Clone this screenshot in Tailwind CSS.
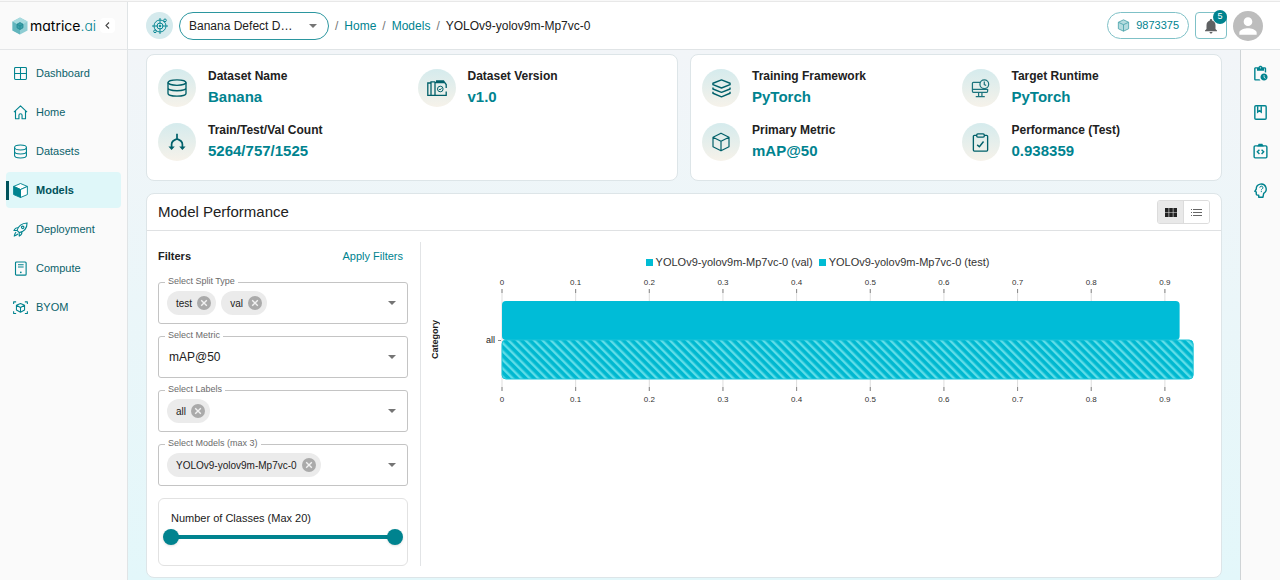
<!DOCTYPE html>
<html lang="en">
<head>
    <meta charset="UTF-8">
    <meta name="viewport" content="width=device-width, initial-scale=1.0">
    <title>matrice.ai - Model Performance</title>
    <script src="https://cdn.jsdelivr.net/npm/@tailwindcss/browser@4"></script>
</head>
<body class="bg-[#f8f8f8] pt-px font-['Liberation_Sans',Arial,sans-serif] text-[#212121]">
    <div class="flex min-h-[calc(100vh-1px)] border-t border-[#e8e8e8]">

        <!-- Sidebar -->
        <aside class="w-32 shrink-0 border-r border-[#e0e4e6] bg-[#fafafa]">
            <div class="flex h-12 items-center border-b border-[#e4e6e8] pl-3">
                <a href="#" class="flex items-center gap-[2px]">
                    <svg class="h-[18px] w-4" viewBox="0 0 16 18">
                        <path d="M8 .5 15.5 4.5v9L8 17.5.5 13.5v-9z" fill="#8fcdd3"/>
                        <path d="M8 .5 15.5 4.500 8 9 .5 4.500z" fill="#a9dbdf"/>
                        <path d="M.5 4.500 8 9v8.500L.5 13.500z" fill="#62b5bd"/>
                        <path d="M8 5.500 11 7.200v3.600L8 12.500 5 10.800V7.200z" fill="#3b9fa9" stroke="#1f8791" stroke-width=".8"/>
                        <path d="M5 7.200 8 9l3-1.800M8 9v3.500" fill="none" stroke="#1f8791" stroke-width=".7"/>
                    </svg>
                    <span class="font-[Inter,sans-serif] text-[14px] leading-5 text-black [font-feature-settings:'cv11','ss03']">matrice<span class="font-light text-[#00838f]">.ai</span></span>
                </a>
                <button type="button" aria-label="Collapse menu" class="ml-1 flex size-[15px] items-center justify-center rounded-sm bg-white">
                    <svg class="size-[9px]" viewBox="0 0 9 9" fill="none" stroke="#444" stroke-width="1.1"><path d="M6 1.500 3 4.500l3 3"/></svg>
                </button>
            </div>
            <nav class="flex flex-col gap-[3px] px-[6px] pt-[5px] text-[11px] text-[#0b626b]">
                <a href="#" class="flex h-9 items-center gap-2 rounded-sm pl-[7px]">
                    <svg class="size-[15px]" viewBox="0 0 24 24" fill="none" stroke="#00838f" stroke-width="1.700"><rect x="2.500" y="2.500" width="19" height="19" rx="1.500"/><path d="M12 2.500v19M2.500 12h19"/></svg>
                    Dashboard
                </a>
                <a href="#" class="flex h-9 items-center gap-2 rounded-sm pl-[7px]">
                    <svg class="size-[15px]" viewBox="0 0 24 24" fill="none" stroke="#00838f" stroke-width="1.800" stroke-linejoin="round"><path d="M1.500 11.500 12 1.500l10.500 10M4 9.500V22h5.500v-5.500a2.500 2.500 0 0 1 5 0V22H20V9.500"/></svg>
                    Home
                </a>
                <a href="#" class="flex h-9 items-center gap-2 rounded-sm pl-[7px]">
                    <svg class="size-[15px]" viewBox="0 0 24 24" fill="none" stroke="#00838f" stroke-width="1.700"><ellipse cx="12" cy="5.500" rx="9.500" ry="4"/><path d="M2.500 5.500v13c0 2.200 4.300 4 9.500 4s9.500-1.800 9.500-4v-13M2.500 12c0 2.200 4.300 4 9.500 4s9.500-1.800 9.500-4"/></svg>
                    Datasets
                </a>
                <a href="#" aria-current="page" class="flex h-9 items-center gap-1 rounded-sm bg-[#dff7f9] font-bold text-[#00525b]">
                    <span class="h-[19px] w-[3px] bg-[#00525b]"></span>
                    <span class="flex items-center gap-2">
                        <svg class="size-[15px]" viewBox="0 0 24 24" stroke="#00838f" stroke-width="1.500" stroke-linejoin="round"><path d="M12 .8 23 5.500 12 10.500 1 5.500z" fill="#fff"/><path d="M23 5.500v13l-11 4.700V10.500z" fill="#fff"/><path d="M1 5.500l11 5v12.700L1 18.500z" fill="#00838f"/></svg>
                        Models
                    </span>
                </a>
                <a href="#" class="flex h-9 items-center gap-2 rounded-sm pl-[7px]">
                    <svg class="size-[15px]" viewBox="0 0 24 24" fill="none" stroke="#00838f" stroke-width="1.800" stroke-linecap="round" stroke-linejoin="round"><path d="M4.500 16.500c-1.500 1.260-2.500 6-2.500 6s4.240-1.500 5.500-3M10 17l-3.500-3.500C8 8 11 2 22.500 1.500 22.500 12 16 15.500 10 17zM8.500 9.500C5 8.500 3 10.500 1.500 13.500l5 0M14 15.500c1 3.500-1 5.500-4 7l0-5.500"/><circle cx="15.500" cy="8.500" r="2"/></svg>
                    Deployment
                </a>
                <a href="#" class="flex h-9 items-center gap-2 rounded-sm pl-[7px]">
                    <svg class="size-[15px]" viewBox="0 0 24 24" fill="none" stroke="#00838f" stroke-width="1.800"><rect x="4" y="1.500" width="17" height="21" rx="1.500"/><path d="M8 6h9M8 9.500h9"/><circle cx="12.500" cy="18" r="1.400" fill="#00838f" stroke="none"/></svg>
                    Compute
                </a>
                <a href="#" class="flex h-9 items-center gap-2 rounded-sm pl-[7px]">
                    <svg class="size-[15px]" viewBox="0 0 24 24" fill="none" stroke="#00838f" stroke-width="1.700" stroke-linejoin="round"><path d="M1 6.500V3h4M19 3h4v3.500M23 18v3.500h-4M5 21.500H1V18"/><path d="M12 5.500 18.500 8.500v7.500L12 19.500 5.500 16V8.500zM5.500 8.500 12 12l6.500-3.500M12 12v7.500"/></svg>
                    BYOM
                </a>
            </nav>
        </aside>

        <div class="flex min-w-0 flex-1 flex-col">
            <!-- Top bar -->
            <header class="flex h-12 items-center justify-between border-b border-[#e0e4e6] bg-white pl-[18px] pr-[17px]">
                <div class="flex items-center gap-[6px] text-[12px]">
                    <span class="flex size-[27px] items-center justify-center rounded-full bg-[#d5eaed]">
                        <svg class="size-4" viewBox="0 0 24 24" fill="none" stroke="#00838f" stroke-width="1.400"><circle cx="12" cy="12" r="9"/><circle cx="12" cy="12" r="4.500"/><circle cx="12" cy="12" r="1.300" fill="#00838f"/><path d="M12 0v9M12 15v9M0 12h9M15 12h9"/><circle cx="19.500" cy="3.500" r="2" fill="#d5eaed"/><circle cx="4.500" cy="20" r="2" fill="#d5eaed"/></svg>
                    </span>
                    <div class="grid items-center">
                        <select aria-label="Project" class="col-start-1 row-start-1 h-7 w-[150px] appearance-none rounded-full border border-[#2b969f] bg-white pl-[9px] text-[12px]">
                            <option>Banana Defect D…</option>
                        </select>
                        <svg class="pointer-events-none col-start-1 row-start-1 mr-3 h-1 w-2 justify-self-end" viewBox="0 0 8 4"><path d="M0 0h8L4 4z" fill="#757575"/></svg>
                    </div>
                    <span class="text-[#757575]">/</span>
                    <a href="#" class="text-[#00838f]">Home</a>
                    <span class="text-[#757575]">/</span>
                    <a href="#" class="text-[#00838f]">Models</a>
                    <span class="text-[#757575]">/</span>
                    <span>YOLOv9-yolov9m-Mp7vc-0</span>
                </div>
                <div class="flex items-center gap-[6px]">
                    <button type="button" class="flex h-[27px] items-center gap-[6px] rounded-full border border-[#7fc1c7] bg-white px-[9px] text-[11px] text-[#00838f]">
                        <svg class="size-[13px]" viewBox="0 0 24 24" fill="#b5dcdf" stroke="#3e9ca5" stroke-width="1.400" stroke-linejoin="round"><path d="M12 1.500 21.500 6v12L12 22.500 2.500 18V6z"/><path d="M2.500 6 12 10.500 21.500 6M12 10.500v12"/></svg>
                        9873375
                    </button>
                    <button type="button" aria-label="Notifications" class="relative flex h-[27px] w-8 items-center justify-center rounded-[4px] border border-[#7fc1c7] bg-white">
                        <svg class="mt-px size-[18px]" viewBox="0 0 24 24" fill="#5f6163"><path d="M12 22c1.100 0 2-.9 2-2h-4c0 1.100.89 2 2 2zm6-6v-5c0-3.070-1.640-5.640-4.500-6.320V4c0-.83-.67-1.500-1.500-1.500s-1.500.67-1.500 1.500v.68C7.630 5.360 6 7.920 6 11v5l-2 2v1h16v-1l-2-2z"/></svg>
                        <span class="absolute -right-px -top-[3px] flex size-[14px] items-center justify-center rounded-full bg-[#00838f] text-[9px] text-white">5</span>
                    </button>
                    <button type="button" aria-label="Account" class="flex size-[30px] items-center justify-center rounded-full bg-[#bdbdbd]">
                        <svg class="size-[26px]" viewBox="0 0 24 24" fill="#fff"><path d="M12 12c2.210 0 4-1.790 4-4s-1.790-4-4-4-4 1.790-4 4 1.790 4 4 4zm0 2c-2.670 0-8 1.340-8 4v2h16v-2c0-2.660-5.330-4-8-4z"/></svg>
                    </button>
                </div>
            </header>

            <div class="flex flex-1">
                <main class="flex min-w-0 flex-1 flex-col gap-3 bg-linear-to-b from-[#f2f5f8] to-[#e3f7fa] px-[18px] pb-[2px] pt-1">
                    <!-- Summary cards -->
                    <div class="grid grid-cols-2 gap-3">
                        <section class="grid grid-cols-2 gap-x-[11px] gap-y-3 rounded-lg border border-[#dde5e8] bg-white px-[11px] pb-[17px] pt-3">
                            <div class="flex h-[42px] items-center gap-3">
                                <span class="flex size-[38px] items-center justify-center rounded-full bg-linear-to-b from-[#d5ebed] to-[#f6f2ea]">
                                    <svg class="h-[18px] w-5" viewBox="0 0 22 20" fill="none" stroke="#00606a" stroke-width="1.500"><ellipse cx="11" cy="4" rx="10" ry="3"/><path d="M1 4v12c0 1.700 4.500 3 10 3s10-1.300 10-3V4M1 10c0 1.700 4.500 3 10 3s10-1.300 10-3"/></svg>
                                </span>
                                <div>
                                    <p class="text-[12px] font-bold leading-[18px]">Dataset Name</p>
                                    <p class="text-[15px] font-bold leading-6 text-[#00838f]">Banana</p>
                                </div>
                            </div>
                            <div class="flex h-[42px] items-center gap-3">
                                <span class="flex size-[38px] items-center justify-center rounded-full bg-linear-to-b from-[#d5ebed] to-[#f6f2ea]">
                                    <svg class="h-4 w-5" viewBox="0 0 20 16" fill="none" stroke="#00606a" stroke-width="1.300"><path d="M4 3H.8v12.300H4M8 1.800H4v13.500h4M19.200 11.500v3.800H8V2.500h9M19.200 8V4.500L16.500 1H9"/><circle cx="13.300" cy="9" r="2.800" stroke-width="1"/><path d="M12 9l1 1 1.600-1.800" stroke-width=".9"/></svg>
                                </span>
                                <div>
                                    <p class="text-[12px] font-bold leading-[18px]">Dataset Version</p>
                                    <p class="text-[15px] font-bold leading-6 text-[#00838f]">v1.0</p>
                                </div>
                            </div>
                            <div class="flex h-[42px] items-center gap-3">
                                <span class="flex size-[38px] items-center justify-center rounded-full bg-linear-to-b from-[#d5ebed] to-[#f6f2ea]">
                                    <svg class="size-[18px]" viewBox="0 0 20 20" fill="none" stroke="#00606a" stroke-width="1.900"><path d="M10 .8v5.700M4 17v-4.500c0-3.500 3-5 6-6 3 1 6 2.500 6 6V17"/><path d="M.5 15h7L4 19zM12.500 15h7L16 19z" fill="#00606a" stroke="none"/></svg>
                                </span>
                                <div>
                                    <p class="text-[12px] font-bold leading-[18px]">Train/Test/Val Count</p>
                                    <p class="text-[15px] font-bold leading-6 text-[#00838f]">5264/757/1525</p>
                                </div>
                            </div>
                        </section>

                        <section class="grid grid-cols-2 gap-x-[11px] gap-y-3 rounded-lg border border-[#dde5e8] bg-white px-[11px] pb-[17px] pt-3">
                            <div class="flex h-[42px] items-center gap-3">
                                <span class="flex size-[38px] items-center justify-center rounded-full bg-linear-to-b from-[#d5ebed] to-[#f6f2ea]">
                                    <svg class="size-[19px]" viewBox="0 0 20 20" fill="none" stroke="#00606a" stroke-width="1.500" stroke-linejoin="round"><path d="M10 1 19 4.500v1.500L10 9.500 1 6v-1.500zM1 9v1.500L10 14l9-3.500V9M1 13.500V15l9 3.800 9-3.800v-1.500"/></svg>
                                </span>
                                <div>
                                    <p class="text-[12px] font-bold leading-[18px]">Training Framework</p>
                                    <p class="text-[15px] font-bold leading-6 text-[#00838f]">PyTorch</p>
                                </div>
                            </div>
                            <div class="flex h-[42px] items-center gap-3">
                                <span class="flex size-[38px] items-center justify-center rounded-full bg-linear-to-b from-[#d5ebed] to-[#f6f2ea]">
                                    <svg class="size-[19px]" viewBox="0 0 20 20" fill="none" stroke="#1c747d" stroke-width="1.300"><path d="M10 3.500H2.500a1 1 0 0 0-1 1V13a1 1 0 0 0 1 1h14a1 1 0 0 0 1-1v-2.500M1.500 11h16M8 14v4M11.500 14v4M5 18.500h9.500"/><circle cx="14" cy="5.500" r="4.600"/><path d="M14 2.500v3.300l2 1"/></svg>
                                </span>
                                <div>
                                    <p class="text-[12px] font-bold leading-[18px]">Target Runtime</p>
                                    <p class="text-[15px] font-bold leading-6 text-[#00838f]">PyTorch</p>
                                </div>
                            </div>
                            <div class="flex h-[42px] items-center gap-3">
                                <span class="flex size-[38px] items-center justify-center rounded-full bg-linear-to-b from-[#d5ebed] to-[#f6f2ea]">
                                    <svg class="size-5" viewBox="0 0 20 20" fill="none" stroke="#00606a" stroke-width="1.200" stroke-linejoin="round"><path d="M10 1.200 18 5.200v9.600l-8 4-8-4V5.200zM2 5.200l8 4 8-4M10 9.200v9.600"/></svg>
                                </span>
                                <div>
                                    <p class="text-[12px] font-bold leading-[18px]">Primary Metric</p>
                                    <p class="text-[15px] font-bold leading-6 text-[#00838f]">mAP@50</p>
                                </div>
                            </div>
                            <div class="flex h-[42px] items-center gap-3">
                                <span class="flex size-[38px] items-center justify-center rounded-full bg-linear-to-b from-[#d5ebed] to-[#f6f2ea]">
                                    <svg class="size-[19px]" viewBox="0 0 20 20" fill="none" stroke="#00606a" stroke-width="1.400" stroke-linejoin="round"><path d="M6 2.500H3.500a1 1 0 0 0-1 1V18a1 1 0 0 0 1 1h13a1 1 0 0 0 1-1V3.500a1 1 0 0 0-1-1H14"/><rect x="6" y="1" width="8" height="3.400" rx="1.200"/><path d="M6.500 12.500l2.300 2 4.400-5.500" stroke-width="1.500"/></svg>
                                </span>
                                <div>
                                    <p class="text-[12px] font-bold leading-[18px]">Performance (Test)</p>
                                    <p class="text-[15px] font-bold leading-6 text-[#00838f]">0.938359</p>
                                </div>
                            </div>
                        </section>
                    </div>

                    <!-- Model performance -->
                    <section class="rounded-lg border border-[#dde5e8] bg-white">
                        <div class="flex h-[37px] items-center justify-between border-b border-[#dfe1e3] px-[11px]">
                            <h2 class="text-[15px]">Model Performance</h2>
                            <div class="flex h-6 overflow-hidden rounded-[3px] border border-[#dcdcdc]">
                                <button type="button" aria-label="Grid view" class="flex w-[26px] items-center justify-center border-r border-[#dcdcdc] bg-[#e9e9e9]">
                                    <svg class="h-[9px] w-3" viewBox="0 0 12 9" fill="#222"><path d="M0 0h3.600v4.200H0zM4.200 0h3.600v4.200H4.200zM8.400 0H12v4.200H8.400zM0 4.800h3.600V9H0zM4.200 4.800h3.600V9H4.200zM8.400 4.800H12V9H8.400z"/></svg>
                                </button>
                                <button type="button" aria-label="List view" class="flex w-[25px] items-center justify-center bg-white">
                                    <svg class="h-[7px] w-[11px]" viewBox="0 0 11 7" fill="#666"><path d="M0 0h1v1H0zM2 0h9v1H2zM0 3h1v1H0zM2 3h9v1H2zM0 6h1v1H0zM2 6h9v1H2z"/></svg>
                                </button>
                            </div>
                        </div>

                        <div class="flex p-[11px]">
                            <form class="flex w-[250px] shrink-0 flex-col gap-3">
                                <div class="flex h-7 items-center justify-between text-[11px]">
                                    <h3 class="font-bold">Filters</h3>
                                    <button type="button" class="pr-[5px] text-[#00838f]">Apply Filters</button>
                                </div>

                                <div class="relative flex h-[42px] items-center gap-[5px] rounded-[3px] border border-[#c4c4c4] pl-2">
                                    <label for="split_type" class="absolute -top-2 left-[6px] bg-white px-[3px] text-[9px] leading-3 text-[#6b6b6b]">Select Split Type</label>
                                    <span class="flex h-6 items-center gap-[5px] rounded-full bg-[#ebebeb] pl-[9px] pr-[5px] text-[10px]">test
                                        <button type="button" aria-label="Remove test"><svg class="block size-[14px]" viewBox="0 0 14 14"><circle cx="7" cy="7" r="7" fill="#aaaaaa"/><path d="M4.200 4.200l5.600 5.600M9.800 4.200 4.200 9.800" stroke="#f2f2f2" stroke-width="1.400"/></svg></button>
                                    </span>
                                    <span class="flex h-6 items-center gap-[5px] rounded-full bg-[#ebebeb] pl-[9px] pr-[5px] text-[10px]">val
                                        <button type="button" aria-label="Remove val"><svg class="block size-[14px]" viewBox="0 0 14 14"><circle cx="7" cy="7" r="7" fill="#aaaaaa"/><path d="M4.200 4.200l5.600 5.600M9.800 4.200 4.200 9.800" stroke="#f2f2f2" stroke-width="1.400"/></svg></button>
                                    </span>
                                    <select id="split_type" class="h-full min-w-0 flex-1 appearance-none"><option></option></select>
                                    <svg class="pointer-events-none mr-[11px] h-1 w-2" viewBox="0 0 8 4"><path d="M0 0h8L4 4z" fill="#757575"/></svg>
                                </div>

                                <div class="relative flex h-[42px] items-center gap-[5px] rounded-[3px] border border-[#c4c4c4]">
                                    <label for="metric" class="absolute -top-2 left-[6px] bg-white px-[3px] text-[9px] leading-3 text-[#6b6b6b]">Select Metric</label>
                                    <select id="metric" class="h-full min-w-0 flex-1 appearance-none pl-[10px] text-[12px]"><option>mAP@50</option></select>
                                    <svg class="pointer-events-none mr-[11px] h-1 w-2" viewBox="0 0 8 4"><path d="M0 0h8L4 4z" fill="#757575"/></svg>
                                </div>

                                <div class="relative flex h-[42px] items-center gap-[5px] rounded-[3px] border border-[#c4c4c4] pl-2">
                                    <label for="labels" class="absolute -top-2 left-[6px] bg-white px-[3px] text-[9px] leading-3 text-[#6b6b6b]">Select Labels</label>
                                    <span class="flex h-6 items-center gap-[5px] rounded-full bg-[#ebebeb] pl-[9px] pr-[5px] text-[10px]">all
                                        <button type="button" aria-label="Remove all"><svg class="block size-[14px]" viewBox="0 0 14 14"><circle cx="7" cy="7" r="7" fill="#aaaaaa"/><path d="M4.200 4.200l5.600 5.600M9.800 4.200 4.200 9.800" stroke="#f2f2f2" stroke-width="1.400"/></svg></button>
                                    </span>
                                    <select id="labels" class="h-full min-w-0 flex-1 appearance-none"><option></option></select>
                                    <svg class="pointer-events-none mr-[11px] h-1 w-2" viewBox="0 0 8 4"><path d="M0 0h8L4 4z" fill="#757575"/></svg>
                                </div>

                                <div class="relative flex h-[42px] items-center gap-[5px] rounded-[3px] border border-[#c4c4c4] pl-2">
                                    <label for="models" class="absolute -top-2 left-[6px] bg-white px-[3px] text-[9px] leading-3 text-[#6b6b6b]">Select Models (max 3)</label>
                                    <span class="flex h-6 items-center gap-[5px] rounded-full bg-[#ebebeb] pl-[9px] pr-[5px] text-[10px]">YOLOv9-yolov9m-Mp7vc-0
                                        <button type="button" aria-label="Remove YOLOv9-yolov9m-Mp7vc-0"><svg class="block size-[14px]" viewBox="0 0 14 14"><circle cx="7" cy="7" r="7" fill="#aaaaaa"/><path d="M4.200 4.200l5.600 5.600M9.800 4.200 4.200 9.800" stroke="#f2f2f2" stroke-width="1.400"/></svg></button>
                                    </span>
                                    <select id="models" class="h-full min-w-0 flex-1 appearance-none"><option></option></select>
                                    <svg class="pointer-events-none mr-[11px] h-1 w-2" viewBox="0 0 8 4"><path d="M0 0h8L4 4z" fill="#757575"/></svg>
                                </div>

                                <div class="h-[68px] rounded-md border border-[#e2e2e2] px-1 pt-[11px]">
                                    <label for="classes_min" class="block pl-2 text-[11px] leading-4">Number of Classes (Max 20)</label>
                                    <!-- two range inputs share one track -->
                                    <div class="mt-[3px] grid items-center">
                                        <div class="col-start-1 row-start-1 mx-2 h-1 rounded-full bg-[#00838f]"></div>
                                        <input id="classes_min" type="range" min="1" max="20" value="1" class="pointer-events-none col-start-1 row-start-1 h-4 w-full appearance-none bg-transparent [&::-webkit-slider-thumb]:pointer-events-auto [&::-webkit-slider-thumb]:size-4 [&::-webkit-slider-thumb]:appearance-none [&::-webkit-slider-thumb]:rounded-full [&::-webkit-slider-thumb]:bg-[#00838f] [&::-webkit-slider-thumb]:shadow">
                                        <input aria-label="Maximum number of classes" type="range" min="1" max="20" value="20" class="pointer-events-none col-start-1 row-start-1 h-4 w-full appearance-none bg-transparent [&::-webkit-slider-thumb]:pointer-events-auto [&::-webkit-slider-thumb]:size-4 [&::-webkit-slider-thumb]:appearance-none [&::-webkit-slider-thumb]:rounded-full [&::-webkit-slider-thumb]:bg-[#00838f] [&::-webkit-slider-thumb]:shadow">
                                    </div>
                                </div>
                            </form>

                            <!-- Chart -->
                            <div class="ml-3 min-w-0 flex-1 border-l border-[#e2e4e6] pr-4 pt-3">
                                <div class="flex justify-center gap-[6px] pl-5 text-[11px] leading-4 text-[#333]">
                                    <span class="flex items-center gap-[3px]"><i class="size-[7px] bg-[#00bcd4]"></i>YOLOv9-yolov9m-Mp7vc-0 (val)</span>
                                    <span class="flex items-center gap-[3px]"><i class="size-[7px] bg-[#00bcd4]"></i>YOLOv9-yolov9m-Mp7vc-0 (test)</span>
                                </div>
                                <div class="mt-[6px] flex items-center">
                                    <span class="ml-2 w-3 rotate-180 text-[9px] font-bold leading-3 [writing-mode:vertical-rl]">Category</span>
                                    <span class="ml-[45px] text-[9px] leading-3">all</span>
                                    <span class="ml-[3px] mr-px h-px w-[3px] bg-[#8a8a8a]"></span>
                                    <svg id="chart" class="h-[128px] min-w-0 flex-1 overflow-visible font-['Liberation_Sans',Arial,sans-serif] text-[8px]" role="img" aria-label="mAP@50 by category">
                                        <defs>
                                            <pattern id="hatch" width="6" height="6" patternUnits="userSpaceOnUse" patternTransform="rotate(-45)">
                                                <rect width="6" height="6" fill="#00b8d0"/>
                                                <rect width="2.400" height="6" fill="#5fdde8"/>
                                            </pattern>
                                        </defs>
                                    </svg>
                                </div>
                            </div>
                        </div>
                    </section>
                </main>

                <!-- Right rail -->
                <aside class="flex w-10 shrink-0 flex-col items-center gap-[22px] border-l border-[#cfd4d6] bg-[#fafafa] pt-[15px]">
                    <button type="button" aria-label="Pending actions"><svg class="block size-[17px]" viewBox="0 0 24 24" fill="#00838f"><path d="M17 12c-2.760 0-5 2.240-5 5s2.240 5 5 5 5-2.240 5-5-2.240-5-5-5zm1.650 7.350L16.500 17.200V14h1v2.790l1.850 1.850-.7.71zM18 3h-3.180C14.400 1.840 13.300 1 12 1s-2.400.84-2.820 2H5c-1.100 0-2 .9-2 2v15c0 1.100.9 2 2 2h7.110c-.59-.57-1.070-1.250-1.420-2H5V5h2v3h10V5h1v5.080c.71.1 1.380.31 2 .6V5c0-1.100-.9-2-2-2zm-6 2c-.55 0-1-.45-1-1s.45-1 1-1 1 .45 1 1-.45 1-1 1z"/></svg></button>
                    <button type="button" aria-label="Documentation"><svg class="block size-[17px]" viewBox="0 0 24 24" fill="none" stroke="#00838f" stroke-width="2"><rect x="4" y="2.500" width="16" height="19" rx="1.500"/><path d="M8 3v8.500l2.500-2 2.500 2V3"/></svg></button>
                    <button type="button" aria-label="Code snippets"><svg class="block size-[17px]" viewBox="0 0 24 24" fill="none" stroke="#00838f" stroke-width="2"><rect x="3" y="4" width="18" height="17" rx="1.500"/><path d="M9 4l1-2h4l1 2z" fill="#00838f"/><path d="M10.500 9.500 7.500 12.500l3 3M13.500 9.500l3 3-3 3"/></svg></button>
                    <button type="button" aria-label="Help"><svg class="block size-[17px]" viewBox="0 0 24 24" fill="none" stroke="#00838f" stroke-width="2" stroke-linejoin="round"><path d="M15.500 21.500H9.500v-3H7.500a1.500 1.500 0 0 1-1.500-1.500v-3l-2-.7L6 10A7 7 0 1 1 16.500 16z"/><path d="M11 8a2.200 2.200 0 1 1 3.300 1.900c-.8.5-1.100.9-1.100 1.800M13.200 12.800v1.500" stroke-width="1.400"/></svg></button>
                </aside>
            </div>
        </div>
    </div>

    <script>
        const chart = document.getElementById('chart');
        const axisMax = 0.9395;
        const series = [
            { value: 0.9200, fill: '#00bcd7', stroke: 'none', y: 25 },
            { value: 0.9384, fill: 'url(#hatch)', stroke: '#1cc4d8', y: 64 }
        ];

        function add(tag, attrs, text) {
            const el = document.createElementNS('http://www.w3.org/2000/svg', tag);
            for (const key in attrs) el.setAttribute(key, attrs[key]);
            if (text) el.textContent = text;
            chart.appendChild(el);
        }

        // Axis labels above and below the bars
        for (let i = 0; i <= 9; i++) {
            const x = (i / 10 / axisMax * 100) + '%';
            const label = i === 0 ? '0' : '0.' + i;
            add('line', { x1: x, x2: x, y1: 13, y2: 115, stroke: '#dddddd' });
            add('line', { x1: x, x2: x, y1: 13, y2: 17, stroke: '#888888' });
            add('line', { x1: x, x2: x, y1: 111, y2: 115, stroke: '#888888' });
            add('text', { x: x, y: 9, 'text-anchor': 'middle', fill: '#333333' }, label);
            add('text', { x: x, y: 126, 'text-anchor': 'middle', fill: '#333333' }, label);
        }

        series.forEach(function (s) {
            add('rect', { x: 0, y: s.y, width: (s.value / axisMax * 100) + '%', height: 39, rx: 4, fill: s.fill, stroke: s.stroke });
        });
    </script>
</body>
</html>
